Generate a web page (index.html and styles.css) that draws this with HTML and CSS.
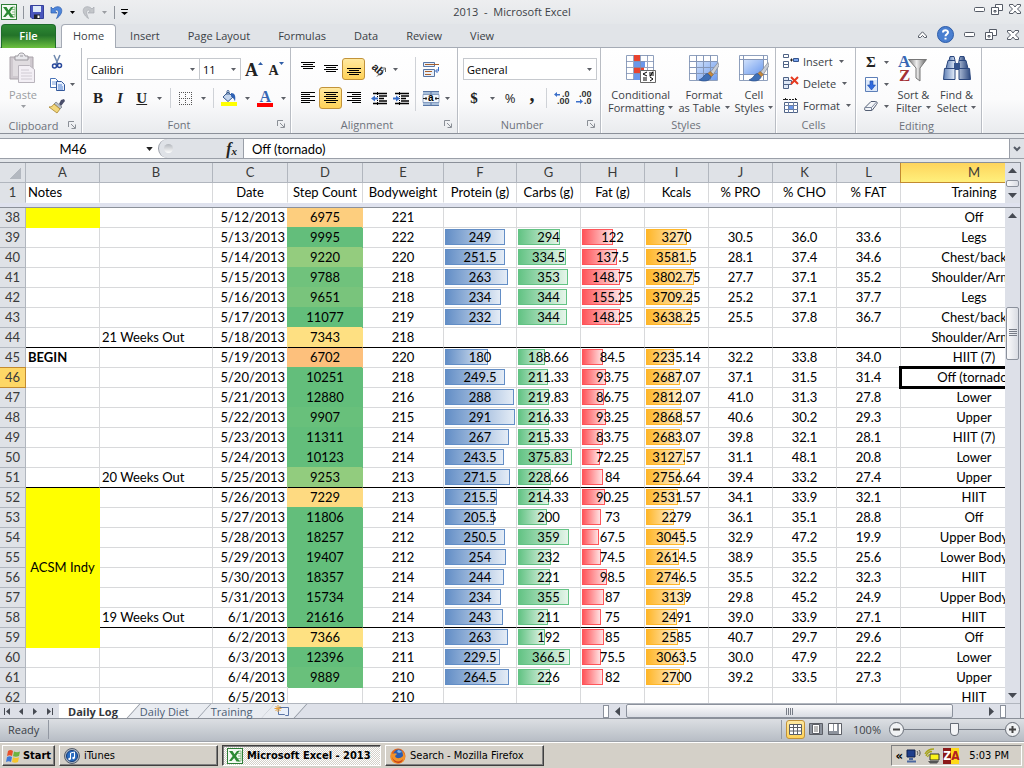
FILE: index.html
```
<!DOCTYPE html>
<html lang="en">
<head>
  <meta charset="UTF-8" />
  <meta name="viewport" content="width=device-width, initial-scale=1.0"/>
  <title>2013 - Microsoft Excel</title>
  <link rel="stylesheet" href="styles.css">
</head>
<body>
  <!-- shared icons -->
  <svg class="defs" width="0" height="0">
    <defs>
      <linearGradient id="blueFill" x1="0" y1="0" x2="1" y2="1"><stop offset="0" stop-color="#cfe0fb"/><stop offset="1" stop-color="#6d9bee"/></linearGradient>
      <linearGradient id="steel" x1="0" y1="0" x2="1" y2="0"><stop offset="0" stop-color="#5f7fb4"/><stop offset=".4" stop-color="#dfe9f8"/><stop offset="1" stop-color="#2c487e"/></linearGradient>
      <linearGradient id="funnel" x1="0" y1="0" x2="1" y2="0"><stop offset="0" stop-color="#777"/><stop offset=".45" stop-color="#eee"/><stop offset="1" stop-color="#666"/></linearGradient>
    </defs>
    <symbol id="caret" viewBox="0 0 5 3"><path d="M0 0h5L2.500 3z" fill="currentColor"/></symbol>
    <symbol id="launcher" viewBox="0 0 8 8"><path d="M.5 6V.5H6M3 3l4 4M7.500 3.500v4h-4" fill="none" stroke="#8a8f96"/></symbol>
    <symbol id="excel" viewBox="0 0 16 16"><rect x=".5" y=".5" width="15" height="15" fill="#f4faf3" stroke="#2f7d38"/><path d="M11 3h3v10h-3M11 5.500h3M11 8h3M11 10.500h3" fill="none" stroke="#8cc08a"/><path d="M2 3h3.500l2 3.200L10 3h2.500L9 8l4 5.500H9.500l-2.300-3.600L4.500 13H2l3.700-5z" fill="#2c8a34"/></symbol>
    <symbol id="min" viewBox="0 0 11 5"><rect x=".5" y=".5" width="10" height="4" rx="1" fill="#fff" stroke="#555b66"/></symbol>
    <symbol id="restore" viewBox="0 0 12 11"><path d="M4.500.5h7v6h-7z" fill="#fff" stroke="#555b66"/><path d="M.5 3.500h7v7h-7z" fill="#fff" stroke="#555b66"/><path d="M3 6.500h2v1.500H3z" fill="#fff" stroke="#555b66"/></symbol>
    <symbol id="close" viewBox="0 0 12 10"><path d="M.5.5h3.500L6 3 8 .5h3.500v1.500L8.500 5l3 3v1.500H8L6 7 4 9.500H.5V8l3-3-3-3z" fill="#fff" stroke="#555b66"/></symbol>
    <symbol id="brush" viewBox="0 0 20 20"><path d="M19 1l-7 9 2.500 2.500L20 4z" fill="#c9ced6" stroke="#858b95" stroke-width=".7"/><path d="M11.500 9.500l-2 2 3 3 2-2z" fill="#c98a3a" stroke="#8a5a20" stroke-width=".6"/><path d="M9 11.500c-3 0-3 4-8 6 4 2 10 1.500 11.500-2.800z" fill="#3f6fb5" stroke="#2b4d85" stroke-width=".6"/></symbol>
  </svg>

  <header class="titlebar">
    <div class="quick">
      <svg width="16" height="16"><use href="#excel"/></svg>
      <i class="tick"></i>
      <button aria-label="Save"><svg width="14" height="14" viewBox="0 0 14 14"><path d="M.5.5h13v13H2L.5 12z" fill="#4a57bd" stroke="#34409a"/><path d="M3 1h8v6H3z" fill="#dfeaf8"/><path d="M4 9.500h6V14H4z" fill="#20242c"/><path d="M7.500 10.500h2V13h-2z" fill="#fff"/></svg></button>
      <button aria-label="Undo"><svg width="13" height="13" viewBox="0 0 13 13"><path d="M1 1v6h6L4.800 5C7 2.800 10.500 4.500 6.500 12.500 13 8.500 13.500 1 8 .7 6 .6 4.300 1.500 3 3z" fill="#4d86dc" stroke="#2c5cae" stroke-width=".7"/></svg></button>
      <button class="drop dark" aria-label="Undo list"><svg class="caret"><use href="#caret"/></svg></button>
      <button aria-label="Redo"><svg width="13" height="13" viewBox="0 0 13 13"><path d="M12 1v6H6l2.200-2C6 2.800 2.500 4.500 6.500 12.500 0 8.500-.5 1 5 .7 7 .6 8.700 1.500 10 3z" fill="#c3c6ca" stroke="#a7abb1" stroke-width=".7"/></svg></button>
      <button class="drop faded" aria-label="Redo list"><svg class="caret"><use href="#caret"/></svg></button>
      <i class="tick"></i>
      <button class="drop dark" aria-label="Customize toolbar"><svg width="7" height="6" viewBox="0 0 7 6"><path d="M0 0h7v1H0zM0 3h7L3.500 6z"/></svg></button>
    </div>
    <h1>2013&nbsp; - &nbsp;Microsoft Excel</h1>
    <div class="window-buttons">
      <button aria-label="Minimize"><svg width="11" height="5"><use href="#min"/></svg></button>
      <button aria-label="Restore"><svg width="12" height="11"><use href="#restore"/></svg></button>
      <button aria-label="Close"><svg width="12" height="10"><use href="#close"/></svg></button>
    </div>
  </header>

  <nav class="tabs">
    <button class="file">File</button>
    <button class="active">Home</button>
    <button>Insert</button>
    <button>Page Layout</button>
    <button>Formulas</button>
    <button>Data</button>
    <button>Review</button>
    <button>View</button>
    <div class="tab-tools">
      <button aria-label="Collapse ribbon"><svg width="9" height="7" viewBox="0 0 9 7"><path d="M.5 5L4.500.8 8.500 5v1.500h-2l-2-2-2 2h-2z" fill="#fff" stroke="#555b66"/></svg></button>
      <button aria-label="Help"><svg width="17" height="17" viewBox="0 0 17 17"><circle cx="8.500" cy="8.500" r="8" fill="#4a7fd0" stroke="#2d5ca8"/><path d="M6 6.500C6 3.500 11 3.500 11 6.300c0 2-2.500 2-2.500 4M8.500 11.800v1.800" fill="none" stroke="#fff" stroke-width="2"/></svg></button>
      <button aria-label="Minimize workbook"><svg width="11" height="5"><use href="#min"/></svg></button>
      <button aria-label="Restore workbook"><svg width="12" height="11"><use href="#restore"/></svg></button>
      <button aria-label="Close workbook"><svg width="12" height="10"><use href="#close"/></svg></button>
    </div>
  </nav>

  <section class="ribbon">
    <div class="group clipboard">
      <div class="group-body">
        <button class="big faded">
          <svg width="28" height="31" viewBox="0 0 28 31"><path d="M1 4h23v22H1z" fill="#cfc9cf" stroke="#aaa3aa"/><path d="M4 6h17v17H4z" fill="#e0dce0"/><path d="M6 3h3c0-4 7-4 7 0h3v4H6z" fill="#e8e8ec" stroke="#9a979d"/><path d="M11 3h3" stroke="#9a979d"/><path d="M9.500 12.500h11l5 4v13h-16z" fill="#f3eff5" stroke="#b9b4bc"/><path d="M12 17h8M12 20h11M12 23h11M12 26h11" stroke="#d0cbd3"/></svg>
          <span>Paste</span>
          <svg class="caret"><use href="#caret"/></svg>
        </button>
        <div class="stack">
          <div><button class="tool" aria-label="Cut"><svg width="10" height="14" viewBox="0 0 10 14"><path d="M2 0l4 9M8 0L4 9" stroke="#6d87ad" stroke-width="1.500"/><circle cx="2.500" cy="11" r="2" fill="none" stroke="#27479b" stroke-width="1.500"/><circle cx="7.500" cy="10.500" r="2" fill="none" stroke="#27479b" stroke-width="1.500"/></svg></button></div>
          <div><button class="tool" aria-label="Copy"><svg width="15" height="13" viewBox="0 0 15 13"><path d="M.5.5h5l3 3v6h-8z" fill="#fff" stroke="#4a74b8"/><path d="M2 4h4M2 6h4" stroke="#7ba0dc"/><path d="M6.500 3.500h5l3 3v6h-8z" fill="#e7f0fd" stroke="#33589b"/><path d="M8 7h4M8 9h5M8 11h5" stroke="#4f7fd0"/></svg></button><button class="drop" aria-label="Copy options"><svg class="caret"><use href="#caret"/></svg></button></div>
          <div><button class="tool" aria-label="Format Painter"><svg width="16" height="14" viewBox="0 0 16 14"><path d="M12 1l3-1 1 2-4 5-2-2z" fill="#4a4e6a"/><path d="M7 3l6 5-2 2-6-5z" fill="#b9c0c8" stroke="#70767f" stroke-width=".7"/><path d="M5 5l6 5-3 4L0 8c2 0 4-1 5-3z" fill="#f3d77b" stroke="#a8842c" stroke-width=".8"/></svg></button></div>
        </div>
      </div>
      <footer><span>Clipboard</span><button aria-label="Clipboard options"><svg width="8" height="8"><use href="#launcher"/></svg></button></footer>
    </div>

    <div class="group font">
      <div class="group-body rows">
        <div class="row">
          <label class="combo family"><select aria-label="Font"><option>Calibri</option></select><svg class="caret"><use href="#caret"/></svg></label>
          <label class="combo size"><select aria-label="Font size"><option>11</option></select><svg class="caret"><use href="#caret"/></svg></label>
          <button class="tool glyph grow" aria-label="Grow font">A<svg width="5" height="3" viewBox="0 0 5 3"><path d="M0 3h5L2.500 0z" fill="#2f5ea8"/></svg></button>
          <button class="tool glyph shrink" aria-label="Shrink font">A<svg width="5" height="3" viewBox="0 0 5 3"><path d="M0 0h5L2.500 3z" fill="#2f5ea8"/></svg></button>
        </div>
        <div class="row">
          <button class="tool glyph"><b>B</b></button>
          <button class="tool glyph"><em>I</em></button>
          <button class="tool glyph"><u>U</u></button>
          <button class="drop" aria-label="Underline options"><svg class="caret"><use href="#caret"/></svg></button>
          <i class="sep"></i>
          <button class="tool" aria-label="Borders"><svg width="13" height="13" viewBox="0 0 13 13"><path d="M.5 0v13M6.500 0v13M12.500 0v13M0 .5h13M0 6.500h13M0 12.500h13" stroke="#555" stroke-dasharray="1 1"/></svg></button>
          <button class="drop" aria-label="Border options"><svg class="caret"><use href="#caret"/></svg></button>
          <i class="sep"></i>
          <button class="tool" aria-label="Fill color"><svg width="16" height="16" viewBox="0 0 16 16"><path d="M2 7l5-5 5 5-5 4.500z" fill="#c5d6ee" stroke="#3b5c8e"/><path d="M6 5V1.500c0-1.500 2-1.500 2 0V5" fill="none" stroke="#3b5c8e"/><path d="M10 3c4 0 5 3 4 8.500-1-2.500-2-4-4-5z" fill="#2f62b5"/><path d="M0 12h16v4H0z" fill="#ff0"/></svg></button>
          <button class="drop" aria-label="Fill options"><svg class="caret"><use href="#caret"/></svg></button>
          <button class="tool glyph fontcolor"><span>A</span></button>
          <button class="drop" aria-label="Font color options"><svg class="caret"><use href="#caret"/></svg></button>
        </div>
      </div>
      <footer><span>Font</span><button aria-label="Font options"><svg width="8" height="8"><use href="#launcher"/></svg></button></footer>
    </div>

    <div class="group alignment">
      <div class="group-body">
        <div class="rows">
          <div class="row">
            <button class="tool wide high" aria-label="Top align"><svg width="14" height="8" viewBox="0 0 14 8"><path d="M0 .5h14M2 2.500h10M0 4.500h14M2 6.500h10" stroke="#000"/></svg></button>
            <button class="tool wide" aria-label="Middle align"><svg width="14" height="8" viewBox="0 0 14 8"><path d="M0 .5h14M2 2.500h10M0 4.500h14M2 6.500h10" stroke="#000"/></svg></button>
            <button class="tool wide low on" aria-label="Bottom align"><svg width="14" height="8" viewBox="0 0 14 8"><path d="M0 .5h14M2 2.500h10M0 4.500h14M2 6.500h10" stroke="#000"/></svg></button>
            <button class="tool" aria-label="Orientation"><svg width="16" height="15" viewBox="0 0 16 15"><text x="0" y="6" transform="rotate(42 0 6)" font-family="Liberation Sans" font-weight="bold" font-size="11" fill="#222">ab</text><path d="M6 14.500l8-8M14.500 10V6h-4" fill="none" stroke="#666"/></svg></button>
            <button class="drop near" aria-label="Orientation options"><svg class="caret"><use href="#caret"/></svg></button>
          </div>
          <div class="row">
            <button class="tool wide" aria-label="Align left"><svg width="14" height="12" viewBox="0 0 14 12"><path d="M0 .5h14M0 2.500h9M0 4.500h14M0 6.500h9M0 8.500h14M0 10.500h9" stroke="#000"/></svg></button>
            <button class="tool wide on" aria-label="Center"><svg width="14" height="12" viewBox="0 0 14 12"><path d="M0 .5h14M2 2.500h10M0 4.500h14M2 6.500h10M0 8.500h14M2 10.500h10" stroke="#000"/></svg></button>
            <button class="tool wide" aria-label="Align right"><svg width="14" height="12" viewBox="0 0 14 12"><path d="M0 .5h14M5 2.500h9M0 4.500h14M5 6.500h9M0 8.500h14M5 10.500h9" stroke="#000"/></svg></button>
            <button class="tool" aria-label="Decrease indent"><svg width="16" height="13" viewBox="0 0 16 13"><path d="M2 1.500h14M8 4h8M8 6.500h5M8 9h8M2 11.500h14" stroke="#000" stroke-width="1.300"/><path d="M6.500 0v13" stroke="#000" stroke-dasharray="1 1"/><path d="M0 6.500l4-3v2h3v2H4v2z" fill="#3a6fc9"/></svg></button>
            <button class="tool" aria-label="Increase indent"><svg width="16" height="13" viewBox="0 0 16 13"><path d="M2 1.500h14M8 4h8M8 6.500h5M8 9h8M2 11.500h14" stroke="#000" stroke-width="1.300"/><path d="M6.500 0v13" stroke="#000" stroke-dasharray="1 1"/><path d="M7 6.500l-4-3v2H0v2h3v2z" fill="#3a6fc9"/></svg></button>
          </div>
        </div>
        <i class="sep tall"></i>
        <div class="rows">
          <div class="row"><button class="tool" aria-label="Wrap text"><svg width="16" height="15" viewBox="0 0 16 15"><path d="M.5.5h11v4H.5zM.5 7.500h11v7H.5z" fill="#e8eff8" stroke="#5876a5"/><path d="M2 2.500h14M2 9.500h7M2 12.500h6" stroke="#a9602c"/><path d="M15.500 5v4H13M14.500 7l-2 2 2 2" fill="none" stroke="#3a6fc9"/></svg></button></div>
          <div class="row"><button class="tool" aria-label="Merge and center"><svg width="16" height="15" viewBox="0 0 16 15"><path d="M0 0h16v15H0z" fill="#a9bfda"/><path d="M0 .5h16M0 14.500h16M8 0v4M8 11v4" stroke="#5876a5"/><path d="M0 3.500h16v8H0z" fill="#f3f7fc" stroke="#5876a5" stroke-width=".6"/><path d="M0 7.500h4M12 7.500h4M3 6v3M13 6v3" stroke="#222"/><text x="5" y="10" font-family="Liberation Sans" font-weight="bold" font-size="10">a</text></svg></button><button class="drop near" aria-label="Merge options"><svg class="caret"><use href="#caret"/></svg></button></div>
        </div>
      </div>
      <footer><span>Alignment</span><button aria-label="Alignment options"><svg width="8" height="8"><use href="#launcher"/></svg></button></footer>
    </div>

    <div class="group number">
      <div class="group-body rows">
        <div class="row"><label class="combo format"><select aria-label="Number format"><option>General</option></select><svg class="caret"><use href="#caret"/></svg></label></div>
        <div class="row">
          <button class="tool glyph"><b>$</b></button>
          <button class="drop" aria-label="Currency options"><svg class="caret"><use href="#caret"/></svg></button>
          <button class="tool percent">%</button>
          <button class="tool glyph comma"><b>,</b></button>
          <i class="sep"></i>
          <button class="tool" aria-label="Increase decimal"><svg width="16" height="16" viewBox="0 0 16 16"><path d="M0 4.500L3 2v2h3v1.500H3V7z" fill="#3a6fc9"/><text x="8" y="7" font-family="Liberation Sans" font-weight="bold" font-size="9" fill="#333">.0</text><text x="3" y="14" font-family="Liberation Sans" font-weight="bold" font-size="9" fill="#333">.00</text></svg></button>
          <button class="tool" aria-label="Decrease decimal"><svg width="16" height="16" viewBox="0 0 16 16"><path d="M7 11.500L4 9v2H0v1.500h4V14z" fill="#3a6fc9"/><text x="8" y="14" font-family="Liberation Sans" font-weight="bold" font-size="9" fill="#333">.0</text><text x="3" y="7" font-family="Liberation Sans" font-weight="bold" font-size="9" fill="#333">.00</text></svg></button>
        </div>
      </div>
      <footer><span>Number</span><button aria-label="Number options"><svg width="8" height="8"><use href="#launcher"/></svg></button></footer>
    </div>

    <div class="group styles">
      <div class="group-body">
        <button class="big">
          <svg width="30" height="30" viewBox="0 0 30 30"><path d="M.5 1.500h27v24H.5z" fill="#fff" stroke="#8fa0bd"/><path d="M8 1h6v6H8zM8 13h10v6H8z" fill="#e8432e"/><path d="M8 7h11v6H8zM8 19h6v7H8z" fill="#6a97ea"/><path d="M7.500 1v25M14.500 1v25M21.500 1v25M0 7.500h28M0 13.500h28M0 19.500h28" stroke="#7f90b3" opacity=".8"/><path d="M14.500 16.500h15v12h-15z" fill="#fff" stroke="#666"/><path d="M21 18l-4 2 4 2M17 24h4M17 26h4M23 19h5M23 21h5M27 17.500l-3 5M24 23l3 2-3 2" fill="none" stroke="#000"/></svg>
          <span>Conditional</span><span>Formatting <svg class="caret"><use href="#caret"/></svg></span>
        </button>
        <button class="big">
          <svg width="30" height="30" viewBox="0 0 30 30"><path d="M.5 1.500h28v25H.5z" fill="#fff" stroke="#8fa0bd"/><path d="M8 7h20v19H8z" fill="url(#blueFill)"/><path d="M7.500 1v25M14.500 1v25M21.500 1v25M0 7.500h28M0 13.500h28M0 19.500h28" stroke="#8496b8"/><use href="#brush" x="9" y="7" width="21" height="22"/></svg>
          <span>Format</span><span>as Table <svg class="caret"><use href="#caret"/></svg></span>
        </button>
        <button class="big">
          <svg width="30" height="30" viewBox="0 0 30 30"><path d="M.5 1.500h28v25H.5z" fill="#fff" stroke="#8fa0bd"/><path d="M5 6h19v14H5z" fill="url(#blueFill)"/><path d="M4.500 1v25M24.500 1v25M0 5.500h28M0 20.500h28" stroke="#8496b8"/><use href="#brush" x="9" y="7" width="21" height="22"/></svg>
          <span>Cell</span><span>Styles <svg class="caret"><use href="#caret"/></svg></span>
        </button>
      </div>
      <footer><span>Styles</span></footer>
    </div>

    <div class="group cells">
      <div class="group-body stack">
        <button class="line"><svg width="16" height="14" viewBox="0 0 16 14"><path d="M.5.5h5v3h-5zM.5 7.500h5v3h-5zM.5 10.500h5v3h-5z" fill="#fff" stroke="#4e6285"/><path d="M10.500 4.500h5v3h-5z" fill="#7aa5ee" stroke="#34538c"/><path d="M7 6h3M8.500 4.500v3" stroke="#222"/></svg>Insert <svg class="caret"><use href="#caret"/></svg></button>
        <button class="line"><svg width="16" height="14" viewBox="0 0 16 14"><path d="M.5 1.500h5v3h-5zM.5 4.500h8v4h-8zM.5 8.500h5v4h-5z" fill="#dfe8f6" stroke="#4e6285"/><path d="M8 1l7 7M15 1L8 8" stroke="#e5391f" stroke-width="2"/></svg>Delete <svg class="caret"><use href="#caret"/></svg></button>
        <button class="line"><svg width="16" height="15" viewBox="0 0 16 15"><path d="M0 1.500h15M2.500 0v3M12.500 0v3" stroke="#222" stroke-dasharray="2 1"/><path d="M1.500 4.500h13v10h-13z" fill="#fff" stroke="#4e6285"/><path d="M5 7h6v4H5z" fill="#6a97ea"/><path d="M5.500 4v11M10.500 4v11M1 7.500h14M1 11.500h14" stroke="#6b7fa5"/></svg>Format <svg class="caret"><use href="#caret"/></svg></button>
      </div>
      <footer><span>Cells</span></footer>
    </div>

    <div class="group editing">
      <div class="group-body">
        <div class="stack">
          <div><button class="tool glyph"><b>Σ</b></button><button class="drop" aria-label="Sum options"><svg class="caret"><use href="#caret"/></svg></button></div>
          <div><button class="tool" aria-label="Fill"><svg width="13" height="15" viewBox="0 0 13 15"><path d="M.5.5h12v14H.5z" fill="#dce8fa" stroke="#5d7fb8"/><path d="M1 1h11v2H1z" fill="#fff"/><path d="M5 4h3v4h2.500l-4 5-4-5H5z" fill="#2f6be0" stroke="#1d4aa8" stroke-width=".6"/></svg></button><button class="drop" aria-label="Fill options"><svg class="caret"><use href="#caret"/></svg></button></div>
          <div><button class="tool" aria-label="Clear"><svg width="14" height="11" viewBox="0 0 14 11"><path d="M7 .5h4.500c2 0 2 2 1 3L8 9.500H2c-2 0-1.500-2-1-3z" fill="#f3f5f9" stroke="#525d72"/><path d="M1 6.500h6.500l5-5.500M7.500 6.500v3" fill="none" stroke="#7c879d"/></svg></button><button class="drop" aria-label="Clear options"><svg class="caret"><use href="#caret"/></svg></button></div>
        </div>
        <button class="big">
          <svg width="30" height="30" viewBox="0 0 30 30"><text x="0" y="13" font-family="Liberation Serif" font-weight="bold" font-size="17" fill="#3767b4">A</text><text x="1" y="27" font-family="Liberation Serif" font-weight="bold" font-size="17" fill="#a33036">Z</text><path d="M10.500 5.500h18L22 14v13l-4-3V14z" fill="url(#funnel)" stroke="#777"/></svg>
          <span>Sort &amp;</span><span>Filter <svg class="caret"><use href="#caret"/></svg></span>
        </button>
        <button class="big">
          <svg width="30" height="30" viewBox="0 0 30 30"><path d="M8 2.500h4l1 4H7zM18 2.500h4l1 4h-6z" fill="url(#steel)" stroke="#2c487e"/><path d="M6 6.500h7l1 8H4zM17 6.500h7l2 8H16z" fill="url(#steel)" stroke="#2c487e"/><path d="M12 9h6v7h-6z" fill="#34538c"/><path d="M2.500 14.500h10.500v11H1.500zM17 14.500h10.500l1 11H17z" fill="url(#steel)" stroke="#2c487e"/></svg>
          <span>Find &amp;</span><span>Select <svg class="caret"><use href="#caret"/></svg></span>
        </button>
      </div>
      <footer><span>Editing</span></footer>
    </div>
  </section>

  <div class="formula-bar">
    <label class="name-box"><input value="M46" aria-label="Name box"><svg class="caret" viewBox="0 0 5 3"><use href="#caret"/></svg></label>
    <div class="fx"><i></i><button aria-label="Insert function"><em>f</em><small>x</small></button></div>
    <input class="formula" value="Off (tornado)" aria-label="Formula">
    <button class="expand" aria-label="Expand formula bar"><svg width="8" height="5" viewBox="0 0 8 5"><path d="M1 1l3 3 3-3" fill="none" stroke="#555b66" stroke-width="2"/></svg></button>
  </div>

  <main class="workbook">
    <div class="pane frozen">
      <div class="clip"><table id="head"></table></div>
      <div class="vscroll">
        <svg width="9" height="5" viewBox="0 0 9 5"><path d="M0 5h9L4.500 0z"/></svg>
        <i class="thumb"></i>
        <svg width="9" height="5" viewBox="0 0 9 5"><path d="M0 0h9L4.500 5z"/></svg>
      </div>
    </div>
    <div class="split"></div>
    <div class="pane scrolling">
      <div class="clip"><table id="body"></table></div>
      <div class="vscroll">
        <svg width="9" height="5" viewBox="0 0 9 5"><path d="M0 5h9L4.500 0z"/></svg>
        <i class="before"></i>
        <i class="thumb grip"></i>
        <i class="after"></i>
        <svg width="9" height="5" viewBox="0 0 9 5"><path d="M0 0h9L4.500 5z"/></svg>
      </div>
    </div>
    <div class="sheetbar">
      <div class="sheet-nav">
        <button aria-label="First sheet"><svg width="7" height="7" viewBox="0 0 7 7"><path d="M0 0h1v7H0zM6 0v7L2 3.500z"/></svg></button>
        <button aria-label="Previous sheet"><svg width="5" height="7" viewBox="0 0 5 7"><path d="M4 0v7L0 3.500z"/></svg></button>
        <button aria-label="Next sheet"><svg width="5" height="7" viewBox="0 0 5 7"><path d="M0 0v7l4-3.500z"/></svg></button>
        <button aria-label="Last sheet"><svg width="7" height="7" viewBox="0 0 7 7"><path d="M6 0h1v7H6zM1 0v7l4-3.500z"/></svg></button>
      </div>
      <button class="sheet current"><span>Daily Log</span></button>
      <button class="sheet"><span>Daily Diet</span></button>
      <button class="sheet"><span>Training</span></button>
      <button class="sheet new" aria-label="Insert sheet"><svg width="15" height="12" viewBox="0 0 15 12"><path d="M4.500 2.500h10v8h-3l-1-1h-6z" fill="#eaf0fa" stroke="#5b75a6"/><path d="M4 0v7M.5 3.500h7M1.500 1l5 5M6.500 1l-5 5" stroke="#e8a13a"/></svg></button>
      <div class="hscroll">
        <i class="handle"></i>
        <svg width="5" height="9" viewBox="0 0 5 9"><path d="M5 0v9L0 4.500z"/></svg>
        <i class="thumb"></i>
        <svg width="5" height="9" viewBox="0 0 5 9"><path d="M0 0v9l5-4.500z"/></svg>
        <i class="handle"></i>
      </div>
    </div>
  </main>

  <div class="status">
    <span class="ready">Ready</span>
    <div class="views">
      <button class="on" aria-label="Normal view"><svg width="13" height="11" viewBox="0 0 13 11"><path d="M.5.5h12v10H.5zM0 3.500h13M0 7h13M4.500 0v11M8.500 0v11" fill="#fff" stroke="#5c5f66"/></svg></button>
      <button aria-label="Page layout view"><svg width="14" height="12" viewBox="0 0 14 12"><path d="M.5.5h13v11H.5z" fill="#8d939d" stroke="#5c5f66"/><path d="M3.500 1.500h7v9h-7z" fill="#fff" stroke="#5c5f66"/><path d="M5 4h4M5 6h4M5 8h4" stroke="#777"/></svg></button>
      <button aria-label="Page break view"><svg width="14" height="12" viewBox="0 0 14 12"><path d="M.5.5h13v11H.5z" fill="#8d939d" stroke="#5c5f66"/><path d="M1 1h4v7H1zM6 1h3v7H6zM11 1h2v10h-2z" fill="#fff"/></svg></button>
    </div>
    <span class="zoom-label">100%</span>
    <div class="zoom">
      <button aria-label="Zoom out"><svg width="15" height="15" viewBox="0 0 15 15"><circle cx="7.500" cy="7.500" r="7" fill="#f0f2f4" stroke="#666c76"/><path d="M4 7.500h7" stroke="#444" stroke-width="2"/></svg></button>
      <input type="range" min="0" max="100" value="50" aria-label="Zoom">
      <button aria-label="Zoom in"><svg width="15" height="15" viewBox="0 0 15 15"><circle cx="7.500" cy="7.500" r="7" fill="#f0f2f4" stroke="#666c76"/><path d="M4 7.500h7M7.500 4v7" stroke="#444" stroke-width="2"/></svg></button>
    </div>
  </div>

  <footer class="taskbar">
    <button class="start"><svg width="15" height="14" viewBox="0 0 15 14"><path d="M2 2c2-1.500 3.500-1 5 0L6 7C4.500 6 3 6 1 7z" fill="#e8502a"/><path d="M8 2.500c2 1 4 1 6 0L13 7c-2 1-4 1-6 .3z" fill="#6db33f"/><path d="M1 8c2-1 3.500-1 5 0l-1 5c-1.500-1-3-1-5 0z" fill="#3f79d8"/><path d="M7 8.300c2 1 4 1 6 0L12 13c-2 1-4 1-6 0z" fill="#f5c52c"/></svg>Start</button>
    <button class="task"><svg width="16" height="16" viewBox="0 0 16 16"><circle cx="8" cy="8" r="7.500" fill="#a9b3c0" stroke="#555e6c"/><circle cx="8" cy="8" r="5.500" fill="#2a6cc0" stroke="#123a78"/><path d="M6.500 11V5l4-1v6" fill="none" stroke="#fff"/><circle cx="5.500" cy="11" r="1.200" fill="#fff"/><circle cx="9.500" cy="10" r="1.200" fill="#fff"/></svg>iTunes</button>
    <button class="task pressed"><svg width="16" height="16"><use href="#excel"/></svg>Microsoft Excel - 2013</button>
    <button class="task"><svg width="16" height="16" viewBox="0 0 16 16"><circle cx="8" cy="8" r="7.500" fill="#e2661b"/><circle cx="8.500" cy="6.500" r="5" fill="#2c5cae"/><path d="M8 2c2 0 3 1 4 2l-3 1-2-1z" fill="#77b4ef"/><path d="M1 3c0 2 1 2 2 3 1-1 3-1 4 0L5 8c1 3 5 3 8 0 0-3-1-4-1-5 4 3 4 9 0 11.500-5 3-11 0-11.500-5z" fill="#f2922a"/><path d="M2 9c2 5 8 6 11 2-1 6-10 5-11-2z" fill="#c8401a"/></svg>Search - Mozilla Firefox</button>
    <div class="tray">
      <button class="more">«</button>
      <svg width="15" height="14" viewBox="0 0 15 14"><path d="M1 1h8v7H1z" fill="#1f3f8c" stroke="#10204a"/><path d="M3 9h4v2H3zM1 11.500h9v2H1z" fill="#4c68a0"/><path d="M11 2c1 1.500 1 3 0 4M13 1c1.500 2 1.500 4 0 6" fill="none" stroke="#555"/></svg>
      <svg width="16" height="16" viewBox="0 0 16 16"><path d="M6 6h9v6H6z" fill="#fbf31a" stroke="#333"/><path d="M4 13h11l-2 2.500H6z" fill="#555"/><path d="M1 6c2-4 5-5 9-5M2 8c1-3 3-4.500 6-4.500M3.500 9c.5-1.500 1-2 2-2.500" fill="none" stroke="#a7a41a" stroke-width="1.300"/></svg>
      <span class="za"><b>Z</b><b>A</b></span>
      <time>5:03 PM</time>
    </div>
  </footer>

  <script src="script.js"></script>
</body>
</html>
```
FILE: styles.css
```
* {
  box-sizing: border-box;
}

body {
  margin: 0;
  height: 100vh;
  overflow: hidden;
  display: flex;
  flex-direction: column;
  background: #e3e6ea;
  color: #3b3f46;
  font-family: "Open Sans", "Noto Sans", sans-serif;
  font-size: 11px;
}

button {
  display: flex;
  align-items: center;
  justify-content: center;
  padding: 0;
  border: 0;
  background: none;
  color: inherit;
  font: inherit;
}

svg {
  display: block;
  flex: none;
  overflow: visible;
}

.defs {
  position: absolute;
}

.caret {
  width: 5px;
  height: 3px;
  color: #5c5f66;
}

/* title bar */
.titlebar {
  display: grid;
  grid-template-columns: 1fr auto 1fr;
  height: 24px;
  background: linear-gradient(#edeef0, #e4e7ea);
}

.titlebar h1 {
  margin: 0;
  font-size: 11px;
  font-weight: normal;
  line-height: 24px;
}

.quick {
  display: flex;
  align-items: center;
  gap: 6px;
  padding-left: 1px;
}

.quick .drop {
  width: 7px;
}

.tick {
  width: 1px;
  height: 13px;
  background: #8e939b;
}

.dark .caret {
  color: #000;
}

.faded,
.faded .caret {
  color: #9a9da2;
}

.window-buttons {
  display: flex;
  justify-content: flex-end;
  gap: 6px;
  height: 18px;
  padding-right: 3px;
}

/* ribbon tabs */
.tabs {
  display: flex;
  height: 24px;
  border-bottom: 1px solid #a5abb5;
  background: #e1e4e8;
}

.tabs > button {
  height: 24px;
  padding: 0 14px 2px;
}

.tabs .file {
  width: 55px;
  margin: 0 5px 0 1px;
  border: 1px solid #1d6b2a;
  border-bottom: 0;
  border-radius: 4px 4px 0 0;
  background: linear-gradient(#2e8a35, #237329 45%, #6cc03f);
  color: #fff;
  font-weight: 600;
}

.tabs .active {
  padding: 0 11px 2px;
  border: 1px solid #a5abb5;
  border-bottom: 0;
  border-radius: 4px 4px 0 0;
  background: #fff;
}

.tab-tools {
  display: flex;
  align-items: center;
  gap: 10px;
  margin-left: auto;
  padding: 0 5px 2px 0;
}

/* ribbon */
.ribbon {
  display: flex;
  height: 86px;
  border-bottom: 1px solid #8b9099;
  background: linear-gradient(#fff, #fbfbfc 60%, #e9ebee);
}

.group {
  display: flex;
  flex-direction: column;
  border-right: 1px solid #b9bdc4;
  box-shadow: 1px 0 #fff;
}

.group-body {
  display: flex;
  flex: 1;
  padding-top: 3px;
}

.group footer {
  display: flex;
  align-items: center;
  height: 18px;
  padding-right: 4px;
  color: #6d727b;
}

.group footer span {
  flex: 1;
  text-align: center;
}

.group footer button {
  width: 10px;
}

.clipboard { width: 82px; }
.font { width: 209px; }
.alignment { width: 167px; }
.number { width: 143px; }
.styles { width: 175px; }
.cells { width: 80px; }
.editing { width: 126px; }

.rows {
  display: flex;
  flex-direction: column;
  gap: 7px;
  padding-top: 7px;
}

.group-body.rows {
  padding: 10px 0 0 5px;
}

.alignment .group-body {
  padding-left: 5px;
}

.row,
.stack > div {
  display: flex;
  align-items: center;
  height: 22px;
}

.stack {
  display: flex;
  flex-direction: column;
}

.clipboard .big {
  width: 46px;
}

.tool {
  width: 22px;
  height: 22px;
  border: 1px solid transparent;
  border-radius: 3px;
}

.tool.wide {
  width: 23px;
}

.tool.on,
.views .on {
  border: 1px solid #c2933a;
  background: linear-gradient(#ffe9a0, #ffd257);
}

.tool.high {
  padding-bottom: 6px;
}

.tool.low {
  padding-top: 6px;
}

.tool.wide:nth-child(3) {
  margin-right: 3px;
}

.drop {
  width: 14px;
  height: 22px;
}

.drop.near {
  width: 10px;
}

.stack .drop {
  width: 8px;
}

.sep {
  width: 1px;
  height: 20px;
  margin: 0 4px 0 3px;
  background: #cfd2d7;
}

.sep.tall {
  height: 54px;
  margin-top: 6px;
}

.glyph {
  color: #222;
  font-family: "Liberation Serif", serif;
  font-size: 15px;
}

.glyph em,
.glyph u {
  font-weight: bold;
}

.grow,
.shrink {
  align-items: flex-start;
  font-size: 18px;
  font-weight: bold;
  line-height: 22px;
}

.shrink {
  font-size: 14px;
  line-height: 24px;
}

.grow svg,
.shrink svg {
  margin-top: 3px;
}

.fontcolor span {
  width: 16px;
  border-bottom: 4px solid #f00;
  color: #3767b4;
  font-size: 16px;
  font-weight: bold;
  line-height: 13px;
}

.percent {
  color: #222;
  font-size: 13px;
}

.comma {
  padding-bottom: 8px;
  font-size: 20px;
}

.combo {
  display: grid;
  align-items: center;
  height: 22px;
  border: 1px solid #c6c9ce;
  background: #fff;
}

.combo select {
  grid-area: 1 / 1;
  appearance: none;
  width: 100%;
  height: 20px;
  padding: 0 3px;
  border: 0;
  background: none;
  color: #000;
  font: inherit;
}

.combo .caret {
  grid-area: 1 / 1;
  justify-self: end;
  margin-right: 4px;
}

.family { width: 113px; }
.size { width: 42px; margin: 0 2px 0 -1px; }
.format { width: 134px; }

.big {
  flex-direction: column;
  justify-content: flex-start;
  height: 64px;
  line-height: 13px;
  white-space: nowrap;
}

.big > svg:first-child {
  margin: 3px 0 4px;
}

.clipboard .big > svg:first-child {
  margin: 2px 0 4px;
}

.big > .caret {
  margin-top: 4px;
}

.big span {
  display: flex;
  align-items: center;
  gap: 4px;
}

.styles .group-body {
  gap: 5px;
  padding-left: 7px;
}

.line {
  justify-content: flex-start;
  gap: 4px;
  height: 22px;
}

.line .caret {
  margin-left: 2px;
}

.cells .group-body {
  padding: 2px 0 0 7px;
}

.editing .group-body {
  gap: 6px;
  padding-left: 4px;
}

/* formula bar */
.formula-bar {
  display: flex;
  height: 21px;
  margin: 4px 0 3px;
  border: 1px solid #9a9fa8;
  border-width: 1px 0;
  background: #fff;
}

.formula-bar input {
  border: 0;
  padding: 0;
  background: none;
  color: #000;
  font-family: Lato, sans-serif;
  font-size: 13px;
}

.name-box {
  display: flex;
  align-items: center;
  width: 158px;
  padding-right: 5px;
}

.name-box input {
  flex: 1;
  min-width: 0;
  text-align: center;
}

.name-box .caret {
  width: 7px;
  height: 4px;
  color: #222;
}

.fx {
  display: flex;
  align-items: center;
  justify-content: space-between;
  width: 86px;
  padding: 0 6px 0 5px;
  border: 1px solid #9a9fa8;
  border-width: 0 1px 0 1px;
  border-radius: 11px 0 0 11px;
  background: #dfe2e7;
}

.fx i {
  width: 9px;
  height: 9px;
  border-radius: 50%;
  background: linear-gradient(#b3b7bd, #fff);
}

.fx button {
  color: #222;
  font: bold 16px "Liberation Serif", serif;
}

.fx small {
  margin-top: 4px;
  font-size: 11px;
  font-style: italic;
}

.formula {
  flex: 1;
  text-indent: 8px;
}

.expand {
  width: 15px;
  border-left: 1px solid #9a9fa8;
  background: #dfe2e7;
}

/* sheet */
.workbook {
  display: flex;
  flex: 1;
  flex-direction: column;
  min-height: 0;
  margin-right: 3px;
  border-top: 1px solid #8b9099;
  border-right: 1px solid #8b9099;
}

.pane {
  display: flex;
}

.scrolling {
  flex: 1;
  min-height: 0;
}

.clip {
  flex: 1;
  min-width: 0;
  overflow: hidden;
  background: #fff;
}

.split {
  height: 5px;
  border-bottom: 1px solid #8b9099;
  background: #dfe2ee;
}

table {
  width: 1048px;
  table-layout: fixed;
  border-collapse: separate;
  border-spacing: 0;
  color: #000;
  font-family: Lato, sans-serif;
  font-size: 13px;
}

th,
td {
  height: 20px;
  padding: 0;
  border: solid #d8d9db;
  border-width: 0 1px 1px 0;
  font-weight: normal;
  line-height: 19px;
  text-align: center;
  white-space: nowrap;
}

th {
  border-color: #b1b6be;
  background: #dfe2e7;
  color: #3a3a3a;
}

thead th.selected {
  border-color: #c28a30;
  background: linear-gradient(#fed45c, #fff07c);
  box-shadow: -1px 0 #c28a30;
}

tbody th.selected {
  border-color: #c28a30;
  background: #fed766;
  box-shadow: 0 -1px #c28a30;
}

.corner {
  background:
    linear-gradient(135deg, transparent 50%, #b3b8c0 50%) 10px 5px / 11px 11px no-repeat,
    #dfe2e7;
}

.frozen tbody td {
  border-bottom-color: #fff;
}

.frozen tbody th {
  border-bottom-color: #dfe2e7;
}

.left {
  padding-left: 2px;
  text-align: left;
}

.date {
  padding-right: 2px;
  text-align: right;
}

.bold {
  font-weight: bold;
}

.yellow {
  border-color: #ff0;
  background: #ff0;
}

.scale {
  border-color: var(--fill);
  background: var(--fill);
  box-shadow: -1px -1px var(--fill);
}

/* a week ends with a black rule */
.week td:not(.yellow) {
  border-bottom-color: #000;
}

.week + tr .scale {
  box-shadow: -1px 0 var(--fill);
}

.bar,
.cursor {
  position: relative;
}

.bar i {
  position: absolute;
  top: 1px;
  left: 1px;
  height: 16px;
  border: 1px solid var(--bar);
  background: linear-gradient(90deg, var(--bar), var(--end));
}

.bar span {
  position: relative;
}

.protein { --bar: #638ec6; --end: #e4ecf6; }
.carbs { --bar: #63c384; --end: #e6f5ea; }
.fat { --bar: #ff555a; --end: #ffe2e3; }
.kcals { --bar: #ffb628; --end: #fff0d2; }

.cursor::after {
  content: "";
  position: absolute;
  inset: -2px;
  border: 3px solid #000;
}

/* scroll bars */
.vscroll {
  display: flex;
  flex-direction: column;
  align-items: center;
  justify-content: space-between;
  width: 15px;
  padding: 5px 0;
  background: #dde0e8;
}

.vscroll svg,
.hscroll svg,
.sheet-nav svg {
  fill: #464a52;
}

.thumb {
  border: 1px solid #8b919c;
  border-radius: 2px;
  background: linear-gradient(90deg, #fbfbfc, #d9dce3);
}

.vscroll .thumb {
  width: 13px;
  height: 7px;
}

.vscroll .before {
  flex: 88;
}

.vscroll .after {
  flex: 331;
}

.vscroll .grip {
  height: 53px;
  background:
    repeating-linear-gradient(#777c86 0 1px, transparent 1px 2px) center / 8px 8px no-repeat,
    linear-gradient(90deg, #fbfbfc, #d9dce3);
}

.sheetbar {
  display: flex;
  height: 15px;
  border-top: 1px solid #b1b6be;
  background: #dde0e8;
}

.sheet-nav {
  display: flex;
  align-items: center;
  justify-content: space-between;
  width: 59px;
  padding: 0 6px 0 4px;
}

.sheet {
  position: relative;
  padding: 0 9px 0 13px;
  color: #4c5c73;
}

.sheet::before {
  content: "";
  position: absolute;
  inset: 0 -7px 0 7px;
  border-right: 1px solid #8b919c;
  background: #e9ecf1;
  transform: skewX(-42deg);
}

.sheet.current {
  z-index: 1;
  padding: 0 9px;
  background: linear-gradient(90deg, #fff 50%, transparent 50%);
  color: #33363b;
  font-weight: 700;
}

.sheet.current::before {
  background: #fff;
}

.sheet.new {
  padding-right: 5px;
}

.sheet span,
.sheet svg {
  position: relative;
}

.hscroll {
  display: flex;
  align-items: center;
  gap: 6px;
  width: 39.5%;
  margin: 0 14px 0 auto;
}

.hscroll .thumb {
  flex: 1;
  height: 14px;
  margin-right: 30px;
  background:
    repeating-linear-gradient(90deg, #777c86 0 1px, transparent 1px 2px) center / 8px 7px no-repeat,
    linear-gradient(#fbfbfc, #d9dce3);
}

.handle {
  width: 6px;
  height: 13px;
  border: 1px solid #8b919c;
  background: #fff;
}

/* status bar */
.status {
  display: flex;
  align-items: center;
  height: 24px;
  padding-bottom: 2px;
  border-top: 1px solid #8b9099;
  border-bottom: 1px solid #9da2aa;
  background: linear-gradient(#dcdfe3, #b7bdc5);
}

.ready {
  width: 49px;
  padding-left: 8px;
  border-right: 1px solid #9298a2;
  line-height: 19px;
}

.views {
  display: flex;
  gap: 2px;
  margin-left: auto;
  padding-left: 4px;
  border-left: 1px solid #9298a2;
}

.views button {
  width: 17px;
  height: 19px;
  border: 1px solid transparent;
  border-radius: 3px;
}

.views button.on {
  width: 19px;
  border-color: #c2933a;
}

.zoom-label {
  margin: 0 8px 0 10px;
}

.zoom {
  display: flex;
  align-items: center;
  padding-right: 4px;
}

.zoom input {
  appearance: none;
  width: 101px;
  height: 15px;
  margin: 0;
  background: linear-gradient(#777d87, #777d87) center / 100% 1px no-repeat;
}

.zoom input::-webkit-slider-thumb {
  appearance: none;
  width: 9px;
  height: 13px;
  border: 1px solid #666c76;
  border-radius: 1px 1px 5px 5px;
  background: #f4f5f7;
}

/* windows taskbar */
.taskbar {
  display: flex;
  gap: 4px;
  height: 26px;
  padding: 2px 2px;
  border-top: 1px solid #fff;
  background: #d4d0c8;
  color: #000;
  font-family: "DejaVu Sans Condensed", "DejaVu Sans", sans-serif;
  font-size: 11px;
}

.start,
.task {
  gap: 4px;
  border: 1px solid;
  border-color: #fff #404040 #404040 #fff;
  box-shadow: inset -1px -1px #808080;
}

.start {
  width: 53px;
  gap: 2px;
  font-weight: bold;
}

.task {
  justify-content: flex-start;
  width: 159px;
  padding-left: 4px;
  white-space: nowrap;
}

.task.pressed {
  border-color: #404040 #fff #fff #404040;
  box-shadow: inset 1px 1px #808080;
  background: repeating-conic-gradient(#fff 0 25%, #d4d0c8 0 50%) 0 0 / 2px 2px;
  font-weight: bold;
}

.tray {
  display: flex;
  align-items: center;
  gap: 3px;
  margin-left: auto;
  padding: 0 12px 0 4px;
  border: 1px solid;
  border-color: #808080 #fff #fff #808080;
}

.more {
  font-size: 13px;
  font-weight: bold;
}

.za {
  display: flex;
  background: #8c1a1a;
  color: #fff;
  font-size: 12px;
  line-height: 16px;
}

.za b {
  width: 8px;
  text-align: center;
}

.za b + b {
  background: #ffd91a;
  color: #b32020;
}

.tray time {
  margin-left: 7px;
}
```
FILE: script.js
```
const widths = [26, 74, 113, 75, 75, 81, 73, 64, 64, 64, 64, 64, 64, 147];
const letters = ["A", "B", "C", "D", "E", "F", "G", "H", "I", "J", "K", "L", "M"];
const titles = ["Notes", "", "Date", "Step Count", "Bodyweight", "Protein (g)", "Carbs (g)",
  "Fat (g)", "Kcals", "% PRO", "% CHO", "% FAT", "Training"];

// row, notes, week, date, steps, weight, protein, carbs, fat, kcals, %pro, %cho, %fat, training
const rows = [
  [38, "", "", "5/12/2013", 6975, 221, "", "", "", "", "", "", "", "Off"],
  [39, "", "", "5/13/2013", 9995, 222, 249, 294, 122, 3270, "30.5", "36.0", "33.6", "Legs"],
  [40, "", "", "5/14/2013", 9220, 220, 251.5, 334.5, 137.5, 3581.5, "28.1", "37.4", "34.6", "Chest/back"],
  [41, "", "", "5/15/2013", 9788, 218, 263, 353, 148.75, 3802.75, "27.7", "37.1", "35.2", "Shoulder/Arms"],
  [42, "", "", "5/16/2013", 9651, 218, 234, 344, 155.25, 3709.25, "25.2", "37.1", "37.7", "Legs"],
  [43, "", "", "5/17/2013", 11077, 219, 232, 344, 148.25, 3638.25, "25.5", "37.8", "36.7", "Chest/back"],
  [44, "", "21 Weeks Out", "5/18/2013", 7343, 218, "", "", "", "", "", "", "", "Shoulder/Arms"],
  [45, "BEGIN", "", "5/19/2013", 6702, 220, 180, 188.66, 84.5, 2235.14, "32.2", "33.8", "34.0", "HIIT (7)"],
  [46, "", "", "5/20/2013", 10251, 218, 249.5, 211.33, 93.75, 2687.07, "37.1", "31.5", "31.4", "Off (tornado)"],
  [47, "", "", "5/21/2013", 12880, 216, 288, 219.83, 86.75, 2812.07, "41.0", "31.3", "27.8", "Lower"],
  [48, "", "", "5/22/2013", 9907, 215, 291, 216.33, 93.25, 2868.57, "40.6", "30.2", "29.3", "Upper"],
  [49, "", "", "5/23/2013", 11311, 214, 267, 215.33, 83.75, 2683.07, "39.8", "32.1", "28.1", "HIIT (7)"],
  [50, "", "", "5/24/2013", 10123, 214, 243.5, 375.83, 72.25, 3127.57, "31.1", "48.1", "20.8", "Lower"],
  [51, "", "20 Weeks Out", "5/25/2013", 9253, 213, 271.5, 228.66, 84, 2756.64, "39.4", "33.2", "27.4", "Upper"],
  [52, "ACSM Indy", "", "5/26/2013", 7229, 213, 215.5, 214.33, 90.25, 2531.57, "34.1", "33.9", "32.1", "HIIT"],
  [53, null, "", "5/27/2013", 11806, 214, 205.5, 200, 73, 2279, "36.1", "35.1", "28.8", "Off"],
  [54, null, "", "5/28/2013", 18257, 212, 250.5, 359, 67.5, 3045.5, "32.9", "47.2", "19.9", "Upper Body"],
  [55, null, "", "5/29/2013", 19407, 212, 254, 232, 74.5, 2614.5, "38.9", "35.5", "25.6", "Lower Body"],
  [56, null, "", "5/30/2013", 18357, 214, 244, 221, 98.5, 2746.5, "35.5", "32.2", "32.3", "HIIT"],
  [57, null, "", "5/31/2013", 15734, 214, 234, 355, 87, 3139, "29.8", "45.2", "24.9", "Upper Body"],
  [58, null, "19 Weeks Out", "6/1/2013", 21616, 214, 243, 211, 75, 2491, "39.0", "33.9", "27.1", "HIIT"],
  [59, null, "", "6/2/2013", 7366, 213, 263, 192, 85, 2585, "40.7", "29.7", "29.6", "Off"],
  [60, "", "", "6/3/2013", 12396, 211, 229.5, 366.5, 75.5, 3063.5, "30.0", "47.9", "22.2", "Lower"],
  [61, "", "", "6/4/2013", 9889, 210, 264.5, 226, 82, 2700, "39.2", "33.5", "27.3", "Upper"],
  [62, "", "", "6/5/2013", "", 210, "", "", "", "", "", "", "", "HIIT"]
];

// data bars: column index -> class and pixels per unit
const bars = {
  6: ["protein", 0.2405],
  7: ["carbs", 0.143],
  8: ["fat", 0.254],
  9: ["kcals", 0.0125]
};

const cols = "<colgroup>" + widths.map(w => `<col style="width:${w}px">`).join("") + "</colgroup>";

// three-colour scale for the step count
function stepColor(steps) {
  const red = [248, 105, 107], yellow = [255, 235, 132], green = [99, 190, 123];
  const up = steps > 7560;
  const to = up ? green : red;
  const t = Math.min(1, up ? (steps - 7560) / 2430 : (7560 - steps) / 2600);
  return `rgb(${yellow.map((c, i) => Math.round(c + (to[i] - c) * t)).join(",")})`;
}

function cell(row, value, i) {
  if (i === 0) return `<th scope="row"${value === 46 ? ' class="selected"' : ""}>${value}</th>`;
  if (value === null) return "";
  if (i === 1) {
    if (row[0] === 52) return `<td class="yellow" rowspan="8">${value}</td>`;
    return `<td class="left bold${row[0] === 38 ? " yellow" : ""}">${value}</td>`;
  }
  if (i === 2) return `<td class="left">${value}</td>`;
  if (i === 3) return `<td class="date">${value}</td>`;
  if (i === 4 && value) return `<td class="scale" style="--fill:${stepColor(value)}">${value}</td>`;
  if (bars[i] && value) {
    const width = Math.round(value * bars[i][1]);
    return `<td class="bar ${bars[i][0]}"><i style="width:${width}px"></i><span>${value}</span></td>`;
  }
  if (i === 13 && row[0] === 46) return `<td class="cursor">${value}</td>`;
  return `<td>${value}</td>`;
}

document.getElementById("head").innerHTML = cols +
  `<thead><tr><th class="corner"></th>${letters.map(l => `<th scope="col"${l === "M" ? ' class="selected"' : ""}>${l}</th>`).join("")}</tr></thead>` +
  `<tbody><tr><th scope="row">1</th>${titles.map((t, i) => `<td${i === 0 ? ' class="left"' : ""}>${t}</td>`).join("")}</tr></tbody>`;

document.getElementById("body").innerHTML = cols + "<tbody>" + rows.map(row =>
  `<tr${row[2] ? ' class="week"' : ""}>${row.map((v, i) => cell(row, v, i)).join("")}</tr>`
).join("") + "</tbody>";
```
